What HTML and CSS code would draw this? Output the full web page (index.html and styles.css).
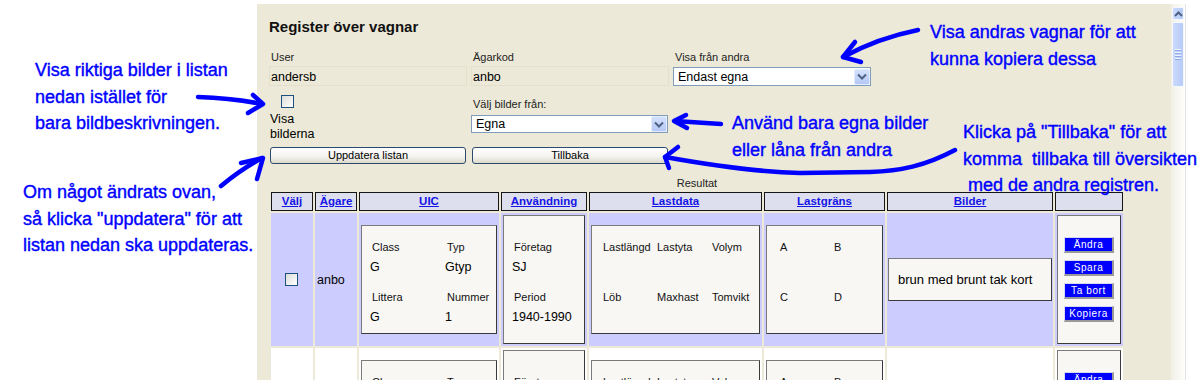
FILE: index.html
```html
<!DOCTYPE html>
<html lang="sv">
<head>
    <meta charset="UTF-8">
    <title>Register över vagnar</title>
    <link rel="stylesheet" href="styles.css">
</head>
<body>
    <div class="page">
        <div class="gutter"></div>

        <main class="panel">
            <h1 class="title">Register över vagnar</h1>

            <div class="form">
                <div class="label">User</div>
                <div class="label">Ägarkod</div>
                <div class="label">Visa från andra</div>

                <div class="value">andersb</div>
                <div class="value">anbo</div>
                <div class="select select-top">
                    <span class="select-text">Endast egna</span>
                    <span class="drop"><svg width="10" height="7" viewBox="0 0 10 7"><path d="M1 1.5 L5 5.5 L9 1.5" fill="none" stroke="#4d6185" stroke-width="2"/></svg></span>
                </div>

                <div class="toggle">
                    <span class="check"></span>
                    <div class="check-label">Visa<br>bilderna</div>
                </div>
                <div class="pics-from">
                    <div class="label">Välj bilder från:</div>
                    <div class="select select-pics">
                        <span class="select-text">Egna</span>
                        <span class="drop"><svg width="10" height="7" viewBox="0 0 10 7"><path d="M1 1.5 L5 5.5 L9 1.5" fill="none" stroke="#4d6185" stroke-width="2"/></svg></span>
                    </div>
                </div>
                <div></div>

                <button class="btn">Uppdatera listan</button>
                <button class="btn">Tillbaka</button>
            </div>

            <div class="results">
                <div class="caption">Resultat</div>
                <div class="grid">
                    <div class="head"><a href="#">Välj</a></div>
                    <div class="head"><a href="#">Ägare</a></div>
                    <div class="head"><a href="#">UIC</a></div>
                    <div class="head"><a href="#">Användning</a></div>
                    <div class="head"><a href="#">Lastdata</a></div>
                    <div class="head"><a href="#">Lastgräns</a></div>
                    <div class="head"><a href="#">Bilder</a></div>
                    <div class="head"></div>

                    <!-- rad 1 -->
                    <div class="cell lilac cell-check"><span class="check"></span></div>
                    <div class="cell lilac owner">anbo</div>
                    <div class="cell lilac">
                        <div class="box short">
                            <div class="pairs pairs-uic">
                                <div class="k">Class</div><div class="k">Typ</div>
                                <div class="v">G</div><div class="v">Gtyp</div>
                                <div class="k">Littera</div><div class="k">Nummer</div>
                                <div class="v">G</div><div class="v">1</div>
                            </div>
                        </div>
                    </div>
                    <div class="cell lilac">
                        <div class="box full">
                            <div class="pairs pairs-use">
                                <div class="k">Företag</div>
                                <div class="v">SJ</div>
                                <div class="k">Period</div>
                                <div class="v">1940-1990</div>
                            </div>
                        </div>
                    </div>
                    <div class="cell lilac">
                        <div class="box short">
                            <div class="pairs pairs-load">
                                <div class="k">Lastlängd</div><div class="k">Lastyta</div><div class="k">Volym</div>
                                <div class="v"></div><div class="v"></div><div class="v"></div>
                                <div class="k">Löb</div><div class="k">Maxhast</div><div class="k">Tomvikt</div>
                                <div class="v"></div><div class="v"></div><div class="v"></div>
                            </div>
                        </div>
                    </div>
                    <div class="cell lilac">
                        <div class="box short">
                            <div class="pairs pairs-limit">
                                <div class="k">A</div><div class="k">B</div>
                                <div class="v"></div><div class="v"></div>
                                <div class="k">C</div><div class="k">D</div>
                                <div class="v"></div><div class="v"></div>
                            </div>
                        </div>
                    </div>
                    <div class="cell lilac cell-pics">
                        <div class="box desc">brun med brunt tak kort</div>
                    </div>
                    <div class="cell lilac">
                        <div class="box full actions">
                            <button class="act">Ändra</button>
                            <button class="act">Spara</button>
                            <button class="act">Ta bort</button>
                            <button class="act">Kopiera</button>
                        </div>
                    </div>

                    <!-- rad 2 -->
                    <div class="cell plain cell-check"><span class="check"></span></div>
                    <div class="cell plain owner">anbo</div>
                    <div class="cell plain">
                        <div class="box short">
                            <div class="pairs pairs-uic">
                                <div class="k">Class</div><div class="k">Typ</div>
                                <div class="v">G</div><div class="v">Gtyp</div>
                                <div class="k">Littera</div><div class="k">Nummer</div>
                                <div class="v">G</div><div class="v">2</div>
                            </div>
                        </div>
                    </div>
                    <div class="cell plain">
                        <div class="box full">
                            <div class="pairs pairs-use">
                                <div class="k">Företag</div>
                                <div class="v">SJ</div>
                                <div class="k">Period</div>
                                <div class="v">1940-1990</div>
                            </div>
                        </div>
                    </div>
                    <div class="cell plain">
                        <div class="box short">
                            <div class="pairs pairs-load">
                                <div class="k">Lastlängd</div><div class="k">Lastyta</div><div class="k">Volym</div>
                                <div class="v"></div><div class="v"></div><div class="v"></div>
                                <div class="k">Löb</div><div class="k">Maxhast</div><div class="k">Tomvikt</div>
                                <div class="v"></div><div class="v"></div><div class="v"></div>
                            </div>
                        </div>
                    </div>
                    <div class="cell plain">
                        <div class="box short">
                            <div class="pairs pairs-limit">
                                <div class="k">A</div><div class="k">B</div>
                                <div class="v"></div><div class="v"></div>
                                <div class="k">C</div><div class="k">D</div>
                                <div class="v"></div><div class="v"></div>
                            </div>
                        </div>
                    </div>
                    <div class="cell plain cell-pics"></div>
                    <div class="cell plain">
                        <div class="box full actions">
                            <button class="act">Ändra</button>
                            <button class="act">Spara</button>
                            <button class="act">Ta bort</button>
                            <button class="act">Kopiera</button>
                        </div>
                    </div>
                </div>
            </div>
        </main>

        <div class="scrollbar">
            <div class="sb-up"><svg width="9" height="6" viewBox="0 0 9 6"><path d="M1 5 L4.5 1.5 L8 5" fill="none" stroke="#4d6185" stroke-width="2"/></svg></div>
            <div class="sb-thumb"><span></span><span></span><span></span><span></span></div>
        </div>
    </div>

    <!-- anteckningar ovanpå sidan -->
    <div class="notes">
        <svg class="arrows" width="1200" height="380" viewBox="0 0 1200 380">
            <g fill="none" stroke="#0000ff" stroke-width="4.5" stroke-linecap="round" stroke-linejoin="round">
                <path d="M198 97 Q232 98 262 104"/>
                <path d="M253 95 L263 104 L248 113"/>

                <path d="M221 186 Q240 170 262 158"/>
                <path d="M241 163 L263 158 L257 179"/>

                <path d="M918 30 Q878 38 843 57"/>
                <path d="M855 42 L843 57 L861 62"/>

                <path d="M721 124 L675 121"/>
                <path d="M686 115 L674 121 L687 128"/>

                <path d="M955 150 C925 166 900 171 870 172 L800 173 C760 172 715 166 665 157"/>
                <path d="M678 147 L665 157 L669 168"/>
            </g>
        </svg>
        <div class="note note-pics">Visa riktiga bilder i listan
nedan istället för
bara bildbeskrivningen.</div>
        <div class="note note-update">Om något ändrats ovan,
så klicka "uppdatera" för att
listan nedan ska uppdateras.</div>
        <div class="note note-others">Visa andras vagnar för att
kunna kopiera dessa</div>
        <div class="note note-own">Använd bara egna bilder
eller låna från andra</div>
        <div class="note note-back">Klicka på "Tillbaka" för att
komma  tillbaka till översikten
 med de andra registren.</div>
    </div>
</body>
</html>
```

FILE: styles.css
```css
html, body {
    margin: 0;
    height: 380px;
    overflow: hidden;
    background-color: #ffffff;
}
body {
    position: relative;
    font-family: "Liberation Sans", Arial, sans-serif;
    color: #000;
}
.page {
    display: flex;
    align-items: flex-start;
    height: 380px;
}
.gutter {
    width: 257px;
    flex: none;
}
.panel {
    width: 914px;
    height: 376px;
    flex: none;
    margin-top: 4px;
    padding: 14px 0 0 12px;
    box-sizing: border-box;
    background-color: #ece9d8;
    overflow: hidden;
}
.title {
    margin: 0;
    font-size: 15px;
    line-height: 18px;
    font-weight: bold;
    color: #111;
}

/* formuläret överst */
.form {
    display: grid;
    grid-template-columns: repeat(3, 198px);
    column-gap: 4px;
    margin-top: 14px;
}
.label {
    font-size: 11px;
    line-height: 14px;
    padding-left: 2px;
    color: #222;
}
.value {
    margin-top: 2px;
    height: 20px;
    box-sizing: border-box;
    border: 1px solid #e3e0cd;
    padding: 1px 0 0 1px;
    font-size: 12.5px;
    line-height: 18px;
}
.select {
    display: flex;
    align-items: center;
    box-sizing: border-box;
    border: 1px solid #7f9db9;
    background-color: #fff;
    padding-left: 4px;
    font-size: 12.5px;
}
.select-top {
    margin-top: 3px;
    height: 19px;
}
.select-pics {
    margin-top: 4px;
    height: 18px;
    width: 197px;
}
.select-text {
    flex: 1;
}
.drop {
    width: 16px;
    height: 16px;
    box-sizing: border-box;
    display: flex;
    align-items: center;
    justify-content: center;
    border: 1px solid #e3ebfd;
    border-radius: 2px;
    background: linear-gradient(#d4e0fd, #b5c9f5);
}
.toggle {
    margin-top: 8px;
}
.check {
    display: block;
    width: 13px;
    height: 13px;
    box-sizing: border-box;
    border: 1px solid #1c5180;
    background: linear-gradient(135deg, #dcdcd7, #ffffff);
}
.toggle .check {
    margin: 1px 0 0 12px;
}
.check-label {
    margin-top: 4px;
    padding-left: 1px;
    font-size: 12.5px;
    line-height: 15px;
}
.pics-from {
    margin-top: 8px;
}
.pics-from .label {
    margin-top: 3px;
}
.btn {
    width: 196px;
    height: 17px;
    margin: 5px 0 0 1px;
    padding: 0;
    box-sizing: border-box;
    border: 1px solid #2b4a6e;
    border-radius: 3px;
    background: linear-gradient(#ffffff 0%, #f5f4ef 55%, #dcd9cc 100%);
    font-family: "Liberation Sans", Arial, sans-serif;
    font-size: 11px;
    line-height: 15px;
    color: #000;
}

/* resultattabellen */
.results {
    width: 856px;
}
.caption {
    margin-top: 12px;
    text-align: center;
    font-size: 11px;
    line-height: 14px;
    color: #222;
}
.grid {
    display: grid;
    grid-template-columns: 42px 42px 140px 86px 173px 121px 166px 68px;
    grid-template-rows: 19px 133px 133px;
    gap: 2px;
    padding: 2px;
}
.head {
    border: 1px solid #151515;
    background-color: #dedfee;
    text-align: center;
    font-size: 11.5px;
    font-weight: bold;
    line-height: 17px;
}
.head a {
    color: #1414e6;
    text-decoration: underline;
}
.cell {
    display: flex;
    align-items: center;
    padding: 2px;
    box-sizing: border-box;
}
.lilac {
    background-color: #ccccff;
}
.plain {
    background-color: #ffffff;
}
.cell-check {
    justify-content: center;
    padding-right: 4px;
}
.owner {
    font-size: 12.5px;
}
.box {
    width: 100%;
    box-sizing: border-box;
    background-color: #f8f7f4;
    border: 1px solid;
    border-color: #7a7a7a #3a3a3a #3a3a3a #7a7a7a;
}
.box.short {
    height: 109px;
    display: flex;
    flex-direction: column;
    justify-content: center;
    padding-top: 6px;
}
.box.full {
    align-self: stretch;
    display: flex;
    flex-direction: column;
    justify-content: center;
    padding-top: 6px;
}
.pairs {
    display: grid;
    grid-template-rows: 14px 21px 29px 21px;
    align-items: end;
}
.pairs .k {
    font-size: 11px;
    line-height: 14px;
    padding-left: 2px;
    color: #111;
}
.pairs .v {
    font-size: 12.5px;
    line-height: 16px;
}
.pairs-uic {
    grid-template-columns: 75px auto;
    padding-left: 8px;
}
.pairs-use {
    grid-template-columns: auto;
    padding-left: 8px;
}
.pairs-load {
    grid-template-columns: 54px 55px auto;
    padding-left: 9px;
}
.pairs-limit {
    grid-template-columns: 54px auto;
    padding-left: 11px;
}
.cell-pics {
    padding: 2px 1px;
}
.box.desc {
    height: 43px;
    padding-left: 9px;
    font-size: 13px;
    line-height: 41px;
}
.actions {
    align-items: center;
    gap: 7px;
}
.box.actions {
    padding-top: 0;
}
.act {
    width: 50px;
    height: 16px;
    padding: 0;
    box-sizing: border-box;
    border: 1px solid;
    border-width: 1px 2px 2px 1px;
    border-color: #d8d8f0 #9a9a9a #9a9a9a #d8d8f0;
    background-color: #0000ff;
    color: #fff;
    font-family: "Liberation Sans", Arial, sans-serif;
    font-size: 10px;
    letter-spacing: 0.6px;
    line-height: 13px;
}

/* rullningslist */
.scrollbar {
    width: 14px;
    height: 376px;
    flex: none;
    margin-top: 4px;
    border-right: 1px solid #e2e2e2;
    background: linear-gradient(to right, #f1efe6, #fefefb);
}
.sb-up {
    margin: 3px 1px 0;
    height: 13px;
    box-sizing: border-box;
    border: 1px solid #f4f7fe;
    border-radius: 2px;
    background: linear-gradient(to right, #cbdafc, #b7cbf7);
    display: flex;
    align-items: center;
    justify-content: center;
}
.sb-thumb {
    margin: 2px 1px 0;
    height: 65px;
    box-sizing: border-box;
    border: 1px solid #f4f7fe;
    border-radius: 2px;
    background: linear-gradient(to right, #cbdafc, #b7cbf7);
    display: flex;
    flex-direction: column;
    align-items: center;
    justify-content: center;
    gap: 1px;
}
.sb-thumb span {
    width: 6px;
    height: 1px;
    background-color: #eef3fe;
    border-bottom: 1px solid #8fa9e6;
}

/* anteckningar */
.notes {
    position: absolute;
    top: 0;
    left: 0;
    width: 1200px;
    height: 380px;
    pointer-events: none;
}
.arrows {
    position: absolute;
    top: 0;
    left: 0;
}
.note {
    position: absolute;
    font-size: 18px;
    line-height: 26.5px;
    color: #0000ff;
    -webkit-text-stroke: 0.4px #0000ff;
    white-space: pre;
}
.note-pics {
    left: 35px;
    top: 57px;
}
.note-update {
    left: 23px;
    top: 179px;
}
.note-others {
    left: 930px;
    top: 19px;
}
.note-own {
    left: 732px;
    top: 110px;
}
.note-back {
    left: 963px;
    top: 119px;
}
```
